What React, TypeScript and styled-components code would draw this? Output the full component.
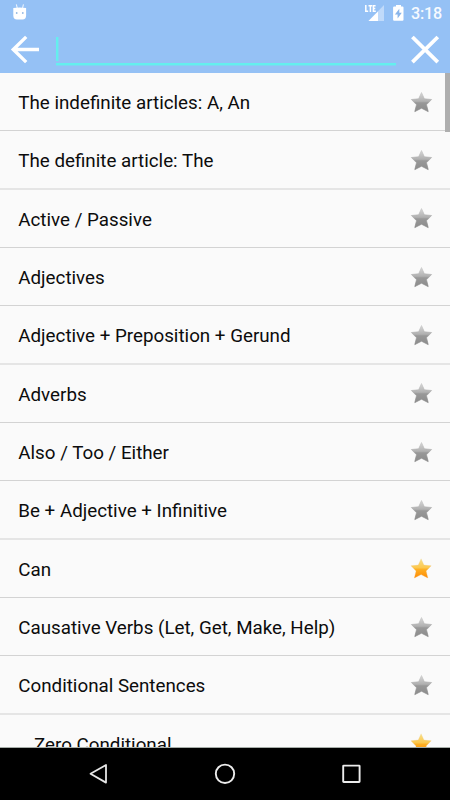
import React from "react";
import styled, { createGlobalStyle } from "styled-components";

const GlobalStyle = createGlobalStyle`
  * { box-sizing: border-box; }
  html, body { margin: 0; padding: 0; overflow: hidden; }
  body { font-family: Roboto, "Noto Sans", sans-serif; background: #fafafa; }
`;

const Screen = styled.div`
  width: 450px;
  height: 800px;
  display: flex;
  flex-direction: column;
  overflow: hidden;
  background: #fafafa;
`;

const Header = styled.header`
  flex: none;
  height: 73px;
  background: #95c1f5;
`;

const StatusBar = styled.div`
  height: 26px;
  display: flex;
  align-items: flex-start;
  justify-content: space-between;
  padding: 0 8px 0 12px;
`;

const StatusIcons = styled.div`
  display: flex;
  align-items: flex-start;
`;

const BatterySlot = styled.span`
  display: flex;
  margin-left: 8px;
`;

const Clock = styled.span`
  width: 31px;
  margin-left: 7px;
  padding-top: 4px;
  font-size: 16.2px;
  line-height: 20px;
  font-weight: 500;
  letter-spacing: -0.2px;
  white-space: nowrap;
  color: #f6faff;
`;

const SearchBar = styled.div`
  height: 47px;
  display: flex;
  align-items: flex-start;
  padding: 0 9px 0 10px;
`;

const IconButton = styled.button`
  flex: none;
  display: block;
  border: 0;
  padding: 8px 0 0;
  background: none;
`;

const SearchField = styled.div`
  flex: 1;
  height: 39px;
  margin: 0 14px 0 16px;
  padding-top: 11px;
  border-bottom: 2px solid #64efed;
  box-shadow: 0 1px 0 rgba(100, 239, 237, 0.45);
`;

const Caret = styled.div`
  width: 2px;
  height: 24px;
  background: #64efed;
  box-shadow: 1px 0 0 rgba(100, 239, 237, 0.4);
`;

const Content = styled.main`
  flex: 1;
  min-height: 0;
  display: flex;
  position: relative;
  overflow: hidden;
  border-bottom: 1px solid #a6ada8;
`;

const TopicList = styled.ul`
  flex: 1;
  list-style: none;
  margin: -0.1px 0 0;
  padding: 0;
`;

const TopicRow = styled.li<{ $nested?: boolean; $soft?: boolean }>`
  height: 58.333px;
  display: flex;
  align-items: center;
  justify-content: space-between;
  padding: ${(p) => (p.$soft ? 3.4 : 2.4)}px 17px 0 ${(p) => (p.$nested ? 34 : 18.3)}px;
  border-bottom: ${(p) => (p.$soft ? "2px solid #e5e5e5" : "1px solid #d3d3d3")};
`;

const TopicName = styled.span`
  padding-top: 0.7px;
  font-size: 18.78px;
  line-height: 24px;
  color: #0c0c0c;
  white-space: nowrap;
`;

const ScrollThumb = styled.div`
  position: absolute;
  top: 0;
  right: 0;
  width: 5px;
  height: 59px;
  background: #aeaeae;
`;

const NavBar = styled.nav`
  flex: none;
  height: 52px;
  background: #000;
  display: flex;
  align-items: center;
  justify-content: center;
  gap: 102px;
`;

const topics: { name: string; starred?: boolean; nested?: boolean }[] = [
  { name: "The indefinite articles: A, An" },
  { name: "The definite article: The" },
  { name: "Active / Passive" },
  { name: "Adjectives" },
  { name: "Adjective + Preposition + Gerund" },
  { name: "Adverbs" },
  { name: "Also / Too / Either" },
  { name: "Be + Adjective + Infinitive" },
  { name: "Can", starred: true },
  { name: "Causative Verbs (Let, Get, Make, Help)" },
  { name: "Conditional Sentences" },
  { name: "Zero Conditional", starred: true, nested: true },
];

const Star = ({ on }: { on?: boolean }) => (
  <svg width="23" height="24" viewBox={on ? "0.4 0 23 24" : "0 0.3 23 24"}>
    <path
      d="M11.5 1.8 14.3 8.1 21.6 8.8 16.5 14 18.2 20.9 11.5 17.5 4.8 20.9 6.5 14 1.4 8.8 8.7 8.1Z"
      fill={on ? "url(#gold)" : "url(#grey)"}
      stroke={on ? "url(#goldEdge)" : "url(#greyEdge)"}
      strokeWidth={on ? 0.3 : 0.7}
      strokeLinejoin="round"
    />
  </svg>
);

const Gradients = () => (
  <svg width="0" height="0" display="block">
    <defs>
      <linearGradient id="grey" x1="0" y1="0" x2="0" y2="1">
        <stop offset="0" stopColor="#d8d8d8" />
        <stop offset="0.46" stopColor="#b0b0b0" />
        <stop offset="0.54" stopColor="#989898" />
        <stop offset="1" stopColor="#8c8c8c" />
      </linearGradient>
      <linearGradient id="greyEdge" x1="0" y1="0" x2="0" y2="1">
        <stop offset="0" stopColor="#cccccc" />
        <stop offset="1" stopColor="#808080" />
      </linearGradient>
      <linearGradient id="gold" x1="0" y1="0" x2="0" y2="1">
        <stop offset="0" stopColor="#f8e08a" />
        <stop offset="0.46" stopColor="#fcc84e" />
        <stop offset="0.56" stopColor="#feae22" />
        <stop offset="1" stopColor="#ff8c05" />
      </linearGradient>
      <linearGradient id="goldEdge" x1="0" y1="0" x2="0" y2="1">
        <stop offset="0" stopColor="#ecd795" />
        <stop offset="1" stopColor="#f79a2a" />
      </linearGradient>
    </defs>
  </svg>
);

const DroidIcon = () => (
  <svg width="16" height="24" viewBox="0 0 16 24">
    <path d="M4.4 4.4 5.2 8M11.4 4.4 10.6 8" stroke="#fff" strokeWidth="0.9" />
    <path d="M1.3 8Q7.7 7 14.1 8V15.5Q14.1 19.5 10.5 19.5H5Q1.3 19.5 1.3 15.5Z" fill="#fff" />
    <circle cx="4.7" cy="13" r="0.9" fill="#95b9e3" />
    <circle cx="10.8" cy="13" r="0.9" fill="#95b9e3" />
  </svg>
);

const SignalIcon = () => (
  <svg width="20" height="24" viewBox="0 0 20 24">
    <path d="M19 5V21H3.5Z" fill="#c0dafa" />
    <path d="M0 4H11.5V13H0Z" fill="#95c1f5" />
    <path d="M13 11.5V21H3.5L11.5 13Z" fill="#fff" />
    <path
      d="M.8 5V11.3H3.2M3.5 5.7H7.2M5.4 5.7V12M10.6 5.7H8.4V11.3H10.8M8.4 8.5H10.3"
      fill="none"
      stroke="#fff"
      strokeWidth="1.5"
    />
  </svg>
);

const BatteryIcon = () => (
  <svg width="11" height="24" viewBox="0 0 11 24">
    <path
      d="M3 5H8V6.5H9.5Q10.5 6.5 10.5 7.5V19.8Q10.5 20.8 9.5 20.8H1.1Q.1 20.8 .1 19.8V7.5Q.1 6.5 1.1 6.5H3Z"
      fill="#fff"
    />
    <path d="M6.3 8.8 1.9 14.4H4.6V18.6L8.8 12.7H6.3Z" fill="#89b5ea" />
  </svg>
);

export default function App() {
  return (
    <Screen>
      <GlobalStyle />
      <Gradients />
      <Header>
        <StatusBar>
          <DroidIcon />
          <StatusIcons>
            <SignalIcon />
            <BatterySlot>
              <BatteryIcon />
            </BatterySlot>
            <Clock>3:18</Clock>
          </StatusIcons>
        </StatusBar>
        <SearchBar>
          <IconButton aria-label="Back">
            <svg width="30" height="32" viewBox="0 0 30 32" display="block">
              <path d="M3 15.5H29M16.2 2.9 3.3 15.5 16.2 28.1" fill="none" stroke="#fff" strokeWidth="3.4" />
            </svg>
          </IconButton>
          <SearchField>
            <Caret />
          </SearchField>
          <IconButton aria-label="Clear">
            <svg width="31" height="32" viewBox="0 0 31 32" display="block">
              <path d="M2.4 3 27.8 28.2M27.8 3 2.4 28.2" fill="none" stroke="#fff" strokeWidth="3.8" />
            </svg>
          </IconButton>
        </SearchBar>
      </Header>
      <Content>
        <TopicList>
          {topics.map((t, i) => (
            <TopicRow key={t.name} $nested={t.nested} $soft={i % 3 === 1}>
              <TopicName>{t.name}</TopicName>
              <Star on={t.starred} />
            </TopicRow>
          ))}
        </TopicList>
        <ScrollThumb />
      </Content>
      <NavBar>
        <svg width="24" height="24" viewBox="0 0 24 24">
          <path d="M19 3V20.6L3.5 11.8Z" fill="none" stroke="#e6e6e6" strokeWidth="1.8" strokeLinejoin="round" />
        </svg>
        <svg width="24" height="24" viewBox="0 0 24 24">
          <circle cx="12" cy="11.8" r="9.2" fill="none" stroke="#ececec" strokeWidth="1.9" />
        </svg>
        <svg width="24" height="24" viewBox="0 0 24 24">
          <rect x="4.2" y="3.6" width="16.4" height="16.4" rx=".5" fill="none" stroke="#ececec" strokeWidth="1.9" />
        </svg>
      </NavBar>
    </Screen>
  );
}
